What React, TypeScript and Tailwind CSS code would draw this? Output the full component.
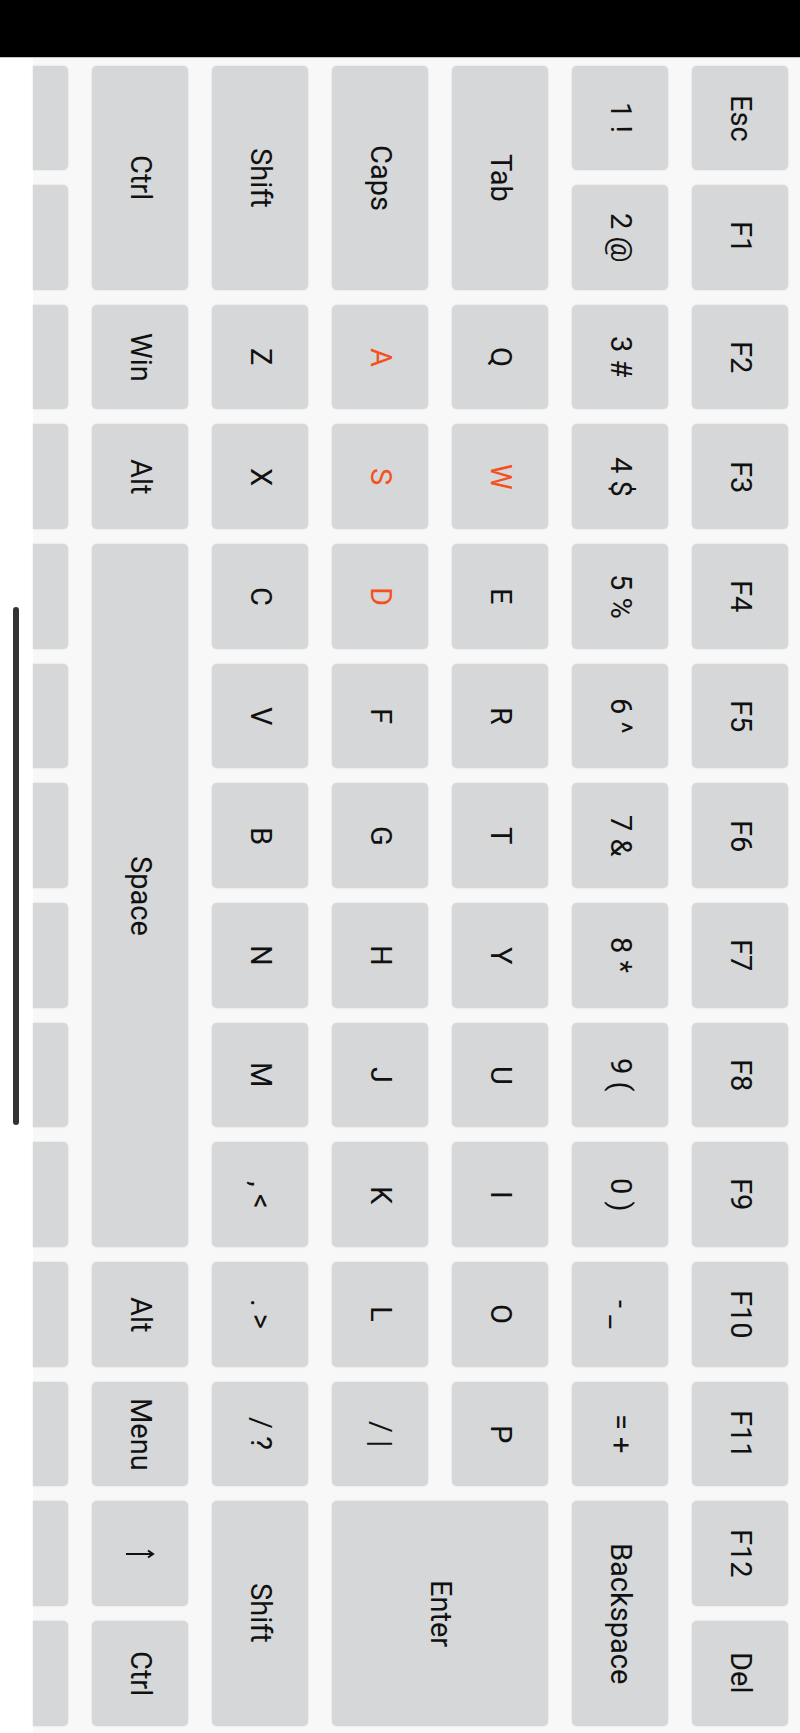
type Key = { label: string; span?: string; hot?: boolean };

const k = (label: string, span = "", hot = false): Key => ({ label, span, hot });
const plain = (labels: string[]) => labels.map((l) => k(l));

// keyboard rows, listed in screen columns from left (bottom row) to right (top row)
const columns: Key[][] = [
  [
    k("Ctrl", "row-span-2"),
    k("Win"),
    k("Alt"),
    k("Space", "row-span-6"),
    k("Alt"),
    k("Menu"),
    k("↑"),
    k("Ctrl"),
  ],
  [
    k("Shift", "row-span-2"),
    ...plain(["Z", "X", "C", "V", "B", "N", "M", ", <", ". >", "/ ?"]),
    k("Shift", "row-span-2"),
  ],
  [
    k("Caps", "row-span-2"),
    k("A", "", true),
    k("S", "", true),
    k("D", "", true),
    ...plain(["F", "G", "H", "J", "K", "L", "/ |"]),
    k("Enter", "col-start-4 col-span-2 row-start-13 row-span-2"),
  ],
  [
    k("Tab", "row-span-2"),
    k("Q"),
    k("W", "", true),
    ...plain(["E", "R", "T", "Y", "U", "I", "O", "P"]),
  ],
  [
    ...plain(["1 !", "2 @", "3 #", "4 $", "5 %", "6 ^", "7 &", "8 *", "9 (", "0 )", "- _", "= +"]),
    k("Backspace", "row-span-2"),
  ],
  plain(["Esc", "F1", "F2", "F3", "F4", "F5", "F6", "F7", "F8", "F9", "F10", "F11", "F12", "Del"]),
];

// up arrow, drawn already turned with the rest of the keyboard
function ArrowUp() {
  return (
    <svg width="30" height="14" viewBox="0 0 30 14" aria-label="↑">
      <path d="M1 7H28M23 3.5L28 7L23 10.5" fill="none" stroke="#111" strokeWidth="2" />
    </svg>
  );
}

function KeyCap({ item }: { item: Key }) {
  return (
    <div
      className={`flex items-center justify-center rounded-[5px] bg-[#d6d7d8] shadow-[0_0_2px_rgba(0,0,0,0.16)] ${item.span ?? ""}`}
    >
      {item.label === "↑" ? (
        <ArrowUp />
      ) : (
        <span
          className={`[writing-mode:vertical-rl] [text-orientation:sideways] whitespace-pre text-[29px] leading-none ${
            item.hot ? "text-[#f4511e]" : "text-[#111]"
          }`}
        >
          {item.label}
        </span>
      )}
    </div>
  );
}

export default function App() {
  return (
    <div className="flex h-[1733px] w-[800px] flex-col overflow-hidden bg-[#f8f8f8] font-[Roboto,sans-serif]">
      {/* status bar */}
      <div className="h-[58px] shrink-0 border-b border-[#c4c4c4] bg-black" />

      <div className="flex min-h-0 flex-1">
        {/* navigation strip with gesture handle */}
        <div className="w-[33px] shrink-0 bg-white pl-[13px] pt-[549px]">
          <div className="h-[518px] w-[6px] rounded-full bg-[#333]" />
        </div>

        <div className="grid flex-1 grid-flow-col grid-cols-[35px_repeat(6,96px)] grid-rows-[repeat(14,minmax(0,1fr))] gap-x-[24px] gap-y-[15px] py-[7.5px] pr-[12px]">
          {Array.from({ length: 14 }).map((_, i) => (
            <div key={`p${i}`} className="rounded-r-[5px] bg-[#d6d7d8] shadow-[0_0_2px_rgba(0,0,0,0.16)]" />
          ))}
          {columns.map((col, ci) =>
            col.map((item, ri) => <KeyCap key={`${ci}-${ri}`} item={item} />)
          )}
        </div>
      </div>
    </div>
  );
}
